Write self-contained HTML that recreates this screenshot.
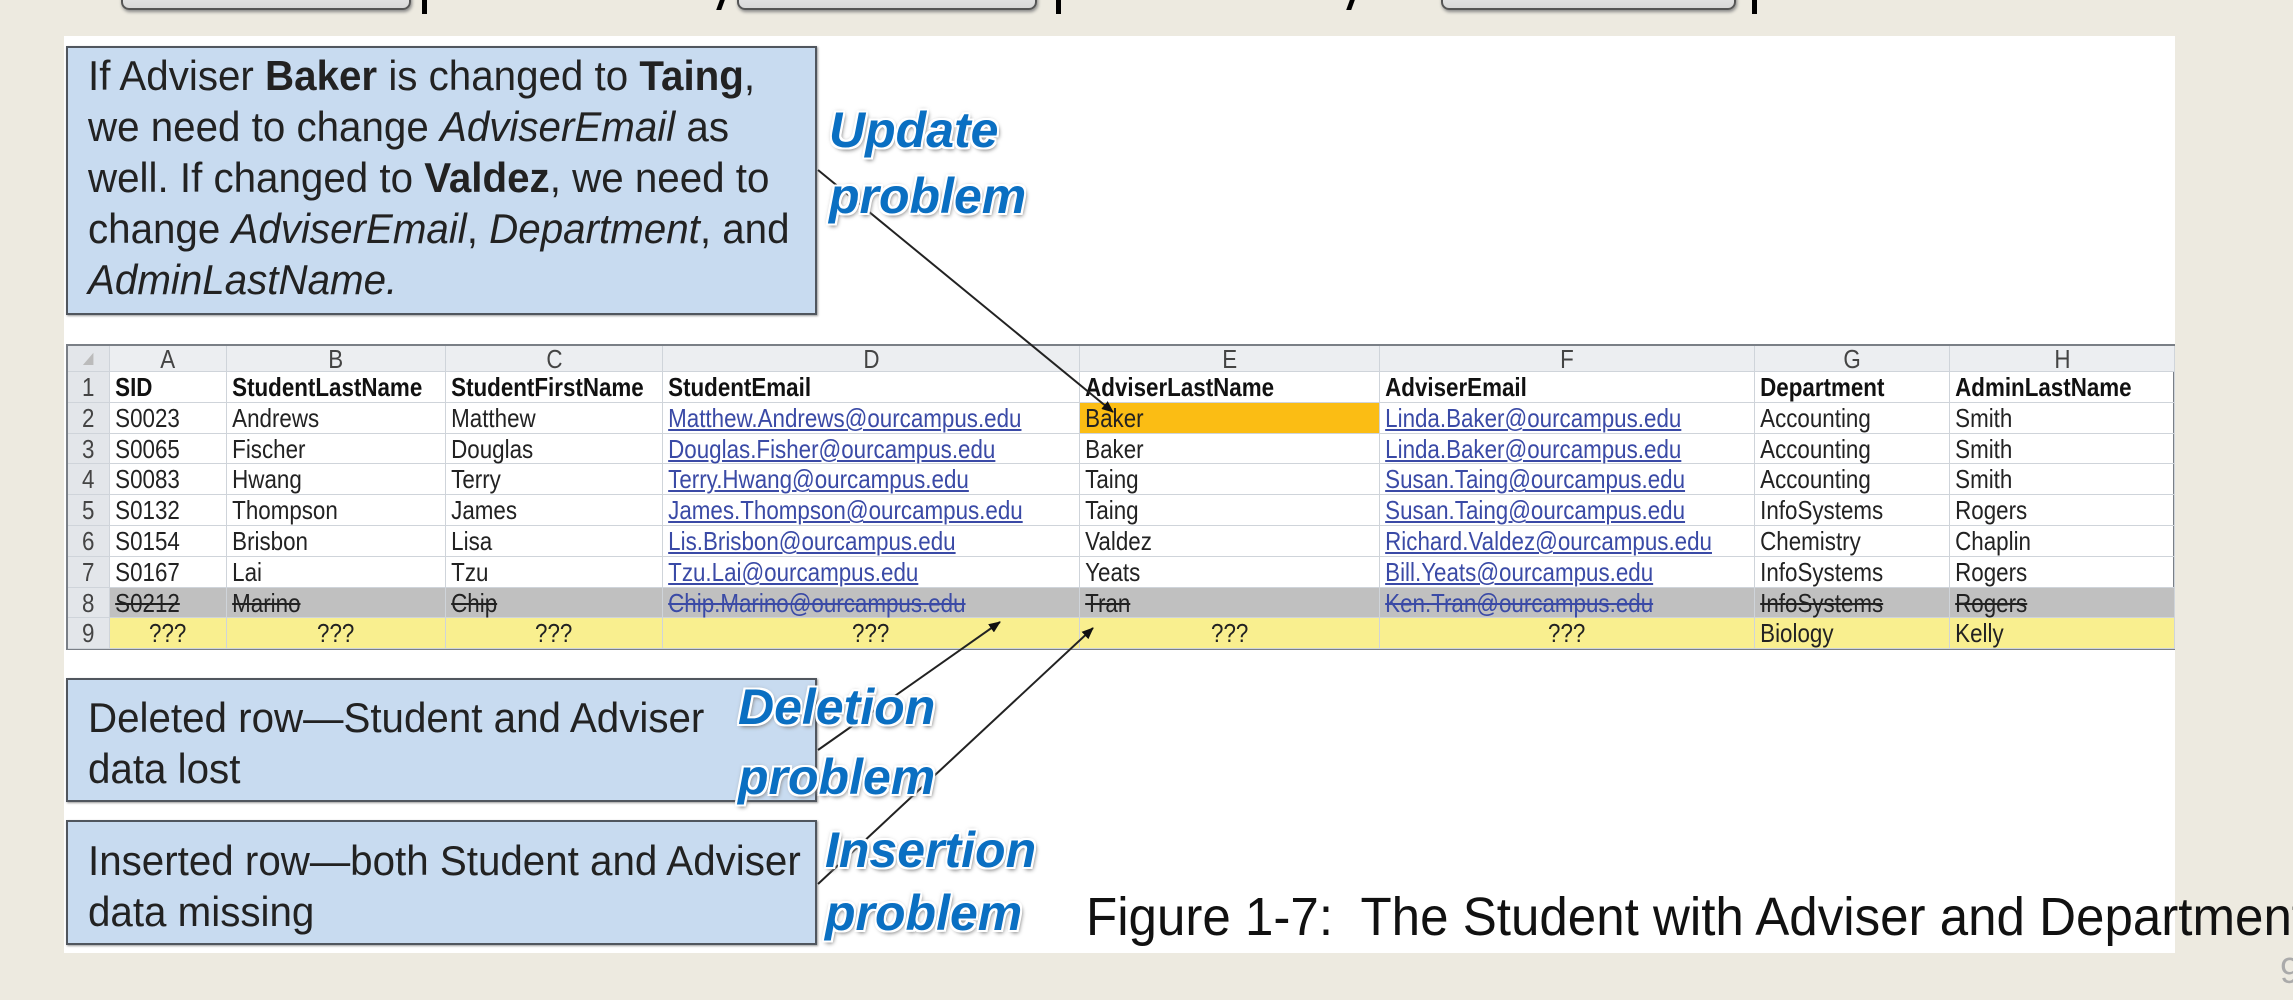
<!DOCTYPE html>
<html><head><meta charset="utf-8"><style>
*{margin:0;padding:0;box-sizing:border-box}
body{width:2293px;height:1000px;background:#edeae0;position:relative;overflow:hidden;font-family:"Liberation Sans",Arial,sans-serif}
.abs{position:absolute}
.hbox{position:absolute;top:-30px;height:40px;border:2px solid #555;border-radius:8px;background:linear-gradient(#fff,#d8d8d8);box-shadow:1px 2px 3px #888}
.white{left:64px;top:36px;width:2111px;height:917px;background:#fff}
.callout{position:absolute;background:#c8dbf0;border:2px solid #50565e;box-shadow:1px 1px 2px #999}
.ct{position:absolute;left:20px;white-space:nowrap;font-size:42px;color:#222;transform:scaleX(.96);transform-origin:left;line-height:51px}
.lab{position:absolute;font-weight:bold;font-style:italic;color:#0a6fc2;font-size:50px;line-height:68px;white-space:nowrap;
text-shadow:2px 0 0 #fff,-2px 0 0 #fff,0 2px 0 #fff,0 -2px 0 #fff,2px 2px 0 #fff,-2px -2px 0 #fff,2px -2px 0 #fff,-2px 2px 0 #fff,0 0 5px #777,2px 3px 4px #888}
.c{position:absolute;height:30.8px;border-right:1px solid #cfd4da;border-bottom:1px solid #cfd4da;font-size:26px;line-height:30px;color:#222;white-space:nowrap;overflow:visible}
.c span{display:inline-block;transform:scaleX(.86);transform-origin:left;padding-left:6px}
.c.ctr{text-align:center}.c.ctr span{transform-origin:center;padding-left:0}
.hd{background:#eceef1;color:#444;text-align:center}
.rn{background:#e3e6ea;color:#444;text-align:center}
.rn span,.hd span{transform-origin:center;padding-left:0}
.b{font-weight:bold;color:#111}
.em{color:#3a4aa6}.em span{text-decoration:underline}
.del{background:#c0c0c0}.del span{text-decoration:line-through}
.ins{background:#f9ef8f}.ins span{text-decoration:none}
</style></head><body>
<div class="hbox" style="left:121px;width:290px"></div>
<div class="abs" style="left:422px;top:0;width:5px;height:14px;background:#000"></div>
<div class="abs" style="left:718px;top:0;width:5px;height:10px;background:#000;transform:skewX(-20deg)"></div>
<div class="hbox" style="left:737px;width:300px"></div>
<div class="abs" style="left:1056px;top:0;width:5px;height:14px;background:#000"></div>
<div class="abs" style="left:1348px;top:0;width:5px;height:10px;background:#000;transform:skewX(-20deg)"></div>
<div class="hbox" style="left:1441px;width:295px"></div>
<div class="abs" style="left:1752px;top:0;width:5px;height:14px;background:#000"></div>

<div class="abs white"></div>

<div class="callout" style="left:66px;top:46px;width:751px;height:269px">
<div class="ct" style="top:2px">If Adviser <b>Baker</b> is changed to <b>Taing</b>,<br>we need to change <i>AdviserEmail</i> as<br>well. If changed to <b>Valdez</b>, we need to<br>change <i>AdviserEmail</i>, <i>Department</i>, and<br><i>AdminLastName.</i></div>
</div>

<div class="callout" style="left:66px;top:678px;width:751px;height:124px">
<div class="ct" style="top:12px">Deleted row—Student and Adviser<br>data lost</div></div>
<div class="callout" style="left:66px;top:820px;width:751px;height:125px">
<div class="ct" style="top:13px">Inserted row—both Student and Adviser<br>data missing</div></div>

<div class="abs" style="left:66px;top:344px;width:2109px;height:306px;border:2px solid #7a7f86;background:#fff"></div>
<div id="cells"></div>

<svg class="abs" style="left:0;top:0" width="2293" height="1000">
<defs><marker id="ah" markerWidth="12" markerHeight="10" refX="11" refY="5" orient="auto" markerUnits="userSpaceOnUse"><path d="M0,0 L12,5 L0,10 Z" fill="#111"/></marker></defs>
<line x1="818" y1="170" x2="1113" y2="412" stroke="#222" stroke-width="2" marker-end="url(#ah)"/>
<line x1="818" y1="750" x2="1000" y2="622" stroke="#222" stroke-width="2" marker-end="url(#ah)"/>
<line x1="818" y1="884" x2="1093" y2="628" stroke="#222" stroke-width="2" marker-end="url(#ah)"/>
</svg>

<div class="lab" style="left:829px;top:96px">Update</div>
<div class="lab" style="left:829px;top:162px">problem</div>
<div class="lab" style="left:738px;top:673px">Deletion</div>
<div class="lab" style="left:738px;top:743px">problem</div>
<div class="lab" style="left:825px;top:816px">Insertion</div>
<div class="lab" style="left:825px;top:879px">problem</div>

<div class="abs" style="left:1086px;top:887px;font-size:54px;line-height:60px;color:#111;white-space:nowrap;transform:scaleX(.946);transform-origin:left">Figure 1-7:&nbsp; The Student with Adviser and Department</div>
<div class="abs" style="left:2280px;top:950px;font-size:36px;color:#aaa">9</div>

<script>
var cols=[66,110,227,446,663,1080,1380,1755,1950,2175];
var rows=[
["A","B","C","D","E","F","G","H"],
["SID","StudentLastName","StudentFirstName","StudentEmail","AdviserLastName","AdviserEmail","Department","AdminLastName"],
["S0023","Andrews","Matthew","Matthew.Andrews@ourcampus.edu","Baker","Linda.Baker@ourcampus.edu","Accounting","Smith"],
["S0065","Fischer","Douglas","Douglas.Fisher@ourcampus.edu","Baker","Linda.Baker@ourcampus.edu","Accounting","Smith"],
["S0083","Hwang","Terry","Terry.Hwang@ourcampus.edu","Taing","Susan.Taing@ourcampus.edu","Accounting","Smith"],
["S0132","Thompson","James","James.Thompson@ourcampus.edu","Taing","Susan.Taing@ourcampus.edu","InfoSystems","Rogers"],
["S0154","Brisbon","Lisa","Lis.Brisbon@ourcampus.edu","Valdez","Richard.Valdez@ourcampus.edu","Chemistry","Chaplin"],
["S0167","Lai","Tzu","Tzu.Lai@ourcampus.edu","Yeats","Bill.Yeats@ourcampus.edu","InfoSystems","Rogers"],
["S0212","Marino","Chip","Chip.Marino@ourcampus.edu","Tran","Ken.Tran@ourcampus.edu","InfoSystems","Rogers"],
["???","???","???","???","???","???","Biology","Kelly"]];
var h='';
for(var r=0;r<10;r++){
 var ty=r==0?346:372+(r-1)*30.8, ht=r==0?26:30.8;
 var rn=r==0?'◢':String(r);
 h+='<div class="c rn" style="left:68px;top:'+ty+'px;width:42px;height:'+ht+'px;'+(r==0?'color:#bbb;font-size:16px;line-height:26px':'')+'"><span>'+rn+'</span></div>';
 for(var c=0;c<8;c++){
  var cls='c';
  if(r==0)cls+=' hd';
  if(r==1)cls+=' b';
  if(r>=2&&r<9&&(c==3||c==5))cls+=' em';
  if(r==8)cls+=' del';
  if(r==9){cls+=' ins'; if(c<6)cls+=' ctr';}
  var st='left:'+cols[c+1]+'px;top:'+ty+'px;width:'+(cols[c+2]-cols[c+1])+'px;height:'+ht+'px;';
  if(r==2&&c==4)st+='background:#fbbd14;';
  if(r==0)st+='line-height:26px;';
  h+='<div class="'+cls+'" style="'+st+'"><span>'+rows[r][c]+'</span></div>';
 }
}
document.getElementById('cells').innerHTML=h;
</script>
</body></html>
